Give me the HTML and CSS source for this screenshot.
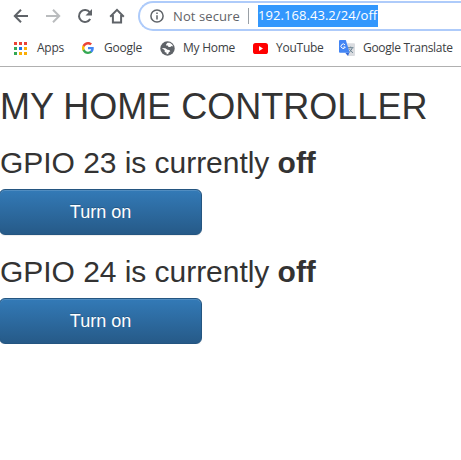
FILE: index.html
```html
<!DOCTYPE html>
<html lang="en">
<head>
<meta charset="utf-8">
<title>My Home Controller</title>
<link rel="stylesheet" href="styles.css">
</head>
<body>
<header class="chrome">
  <div class="toolbar">
    <svg class="nav" viewBox="0 0 16 16"><path d="M15 8H2.5M8 1.8L1.8 8L8 14.2"/></svg>
    <svg class="nav disabled" viewBox="0 0 16 16"><path d="M1 8h12.5M8 1.8L14.2 8L8 14.2"/></svg>
    <svg class="nav" viewBox="0 0 16 16"><path d="M13.2 11A6 6 0 1 1 12.8 4.4"/><path class="solid" d="M15 1v6.5H8.5z"/></svg>
    <svg class="nav" viewBox="0 0 16 16"><path d="M1.2 8.7L8 1.8l6.8 6.9M3.9 7v7.6h8.2V7"/></svg>
    <div class="omnibox">
      <svg class="info" viewBox="0 0 14 14"><circle cx="7" cy="7" r="6.1"/><path d="M7 6.2v4.3M7 3.5v1.5"/></svg>
      <span class="status">Not secure</span>
      <span class="divider"></span>
      <span class="url">192.168.43.2/24/off</span>
    </div>
  </div>
  <nav class="bookmarks">
    <a class="bookmark apps"><svg width="13" height="13" viewBox="0 0 13 13"><path fill="#ea4335" d="M0 0h3v3H0zM5 0h3v3H5zM10 0h3v3h-3z"/><path fill="#34a853" d="M0 5h3v3H0zM0 10h3v3H0z"/><path fill="#1a73e8" d="M5 5h3v3H5z"/><path fill="#fbae05" d="M10 5h3v3h-3zM5 10h3v3H5zM10 10h3v3h-3z"/></svg><span>Apps</span></a>
    <a class="bookmark google"><svg width="12" height="12" viewBox="2 2 44 44"><path fill="#4285f4" d="M45.1 24.5c0-1.6-.1-3.1-.4-4.5H24v8.5h11.8c-.5 2.8-2.1 5.1-4.4 6.7v5.5h7.1c4.2-3.8 6.6-9.5 6.6-16.2z"/><path fill="#34a853" d="M24 46c5.9 0 10.9-2 14.6-5.3l-7.1-5.5c-2 1.3-4.5 2.1-7.5 2.1-5.7 0-10.6-3.9-12.3-9.1H4.3v5.7C8 41.1 15.4 46 24 46z"/><path fill="#fbbc05" d="M11.7 28.2a13 13 0 0 1 0-8.4v-5.7H4.3a22 22 0 0 0 0 19.8z"/><path fill="#ea4335" d="M24 10.8c3.2 0 6.1 1.1 8.4 3.3l6.3-6.3C34.9 4.2 29.9 2 24 2 15.4 2 8 6.9 4.3 14.1l7.4 5.7c1.7-5.2 6.6-9 12.3-9z"/></svg><span>Google</span></a>
    <a class="bookmark home"><svg width="15" height="15" viewBox="0 0 15 15"><circle cx="7.5" cy="7.5" r="7.2" fill="#5f6368"/><path fill="#fff" d="M7.5 1.8h2.2c1.7.7 2.9 2 3.5 3.8L11.7 5l-1.5 1-1.6-.1-1-1.3-1.5-.2.1-1.1zM1.8 7l3.5.2 2.2 1.6 1.8.1 1 1.3-1.5 1.1-.6 1.7-1.6.3V11.8L4.7 11V9.3z"/></svg><span>My Home</span></a>
    <a class="bookmark youtube"><svg width="15" height="11" viewBox="0 0 15 11"><rect width="15" height="11" rx="2.6" fill="#f00"/><path fill="#fff" d="M6 3.1v4.8l4-2.4z"/></svg><span>YouTube</span></a>
    <a class="bookmark translate"><svg width="16" height="16" viewBox="0 0 16 16"><path fill="#dadce0" d="M6 3.2h9q1 0 1 1V15q0 1-1 1H9z"/><path d="M9 7.7h5.5M11.7 6.6v1.1M13.3 7.8q-.8 3-3.3 4.6M10.4 8.8q1 2.5 3.6 4" fill="none" stroke="#6e8593"/><path fill="#3367d6" d="M6.2 12.7h4L9 16z"/><path fill="#4385f4" d="M1 0h5.8l3.9 12.7H1q-1 0-1-1V1q0-1 1-1z"/><path d="M6 4.9A2.2 2.2 0 1 0 6.3 7H4.4" fill="none" stroke="#fff"/></svg><span>Google Translate</span></a>
  </nav>
</header>
<main class="page">
  <h1>MY HOME CONTROLLER</h1>
  <h2>GPIO 23 is currently <strong>off</strong></h2>
  <button class="btn">Turn on</button>
  <h2>GPIO 24 is currently <strong>off</strong></h2>
  <button class="btn">Turn on</button>
</main>
</body>
</html>
```
FILE: styles.css
```css
* { box-sizing: border-box; }
body {
  margin: 0;
  background: #fff;
  color: #333;
  font-family: "Liberation Sans", Arial, sans-serif;
}
.chrome {
  height: 67px;
  border-bottom: 1px solid #b0b0b0;
  font-family: "Open Sans", "Noto Sans", sans-serif;
}
.toolbar {
  display: flex;
  align-items: center;
  height: 32px;
  padding-left: 13px;
  gap: 16px;
}
.nav {
  flex: none;
  width: 16px;
  height: 16px;
  fill: none;
  stroke: #5f6368;
  stroke-width: 2;
}
.disabled { stroke: #babcbe; }
.solid { fill: #5f6368; stroke: none; }
.omnibox {
  flex: 1;
  display: flex;
  align-items: center;
  height: 30px;
  margin-left: -3px;
  padding-left: 10px;
  border: 2px solid #aecbfa;
  border-right: 0;
  border-radius: 15px 0 0 15px;
  font-size: 13px;
  white-space: nowrap;
}
.info {
  flex: none;
  width: 14px;
  height: 14px;
  fill: none;
  stroke: #5f6368;
  stroke-width: 1.5;
}
.status {
  width: 75px;
  margin-left: 9px;
  color: #5f6368;
  letter-spacing: .1px;
}
.divider {
  width: 1px;
  height: 16px;
  background: #9aa0a6;
}
.url {
  width: 120px;
  height: 22px;
  margin-left: 9px;
  line-height: 21px;
  background: #3297fd;
  color: #fff;
  letter-spacing: .06px;
}
.bookmarks {
  display: flex;
  height: 32px;
  padding-left: 14px;
  font-size: 12px;
  color: #3c4043;
  white-space: nowrap;
  letter-spacing: -.25px;
}
.bookmark {
  flex: none;
  display: flex;
  align-items: center;
}
.bookmark span { margin-top: -1px; }
.apps { width: 68px; gap: 10px; }
.google { width: 78px; gap: 10px; }
.home { width: 93px; gap: 8px; }
.youtube { width: 86px; gap: 8px; }
.translate { gap: 8px; letter-spacing: -.31px; }
.page { display: flow-root; }
h1, h2 {
  font-weight: 400;
  line-height: 1.1;
  white-space: nowrap;
}
h1 {
  margin: 20px 0 10px;
  font-size: 36px;
}
h2 {
  margin: 19px 0 10px;
  font-size: 30px;
  letter-spacing: -.04px;
}
.btn + h2 { margin-top: 20px; }
.btn {
  display: block;
  width: 203px;
  height: 46px;
  margin-left: -1px;
  padding: 10px 16px;
  border: 1px solid #245580;
  border-radius: 6px;
  background: linear-gradient(#337ab7, #265a88);
  box-shadow: inset 0 1px 0 rgba(255, 255, 255, .15), 0 1px 1px rgba(0, 0, 0, .075);
  color: #fff;
  font: 18px/24px "Liberation Sans", Arial, sans-serif;
  text-shadow: 0 -1px 0 rgba(0, 0, 0, .2);
}
```
